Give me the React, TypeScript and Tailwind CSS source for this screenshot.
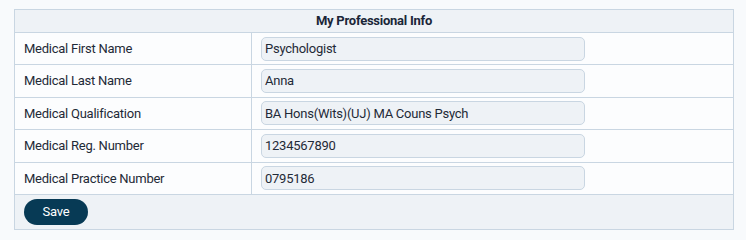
import React from "react";

const rows: [string, string][] = [
  ["Medical First Name", "Psychologist"],
  ["Medical Last Name", "Anna"],
  ["Medical Qualification", "BA Hons(Wits)(UJ) MA Couns Psych"],
  ["Medical Reg. Number", "1234567890"],
  ["Medical Practice Number", "0795186"],
];

export default function App() {
  return (
    <div
      className="w-[746px] h-[240px] bg-[#f8fafc] pl-[14px] pt-[9px]"
      style={{ fontFamily: "Roboto, 'Liberation Sans', sans-serif" }}
    >
      <div className="w-[720px] border border-[#c9d6e2] bg-[#fcfdfe] text-[13px] tracking-[-0.25px] text-[#1f2a37]">
        <div className="h-[23px] bg-[#eef2f6] border-b border-[#c9d6e2] flex items-center justify-center font-bold text-[#1a2638]">
          My Professional Info
        </div>
        {rows.map(([label, value]) => (
          <div
            key={label}
            className="flex h-[32.4px] border-b border-[#c9d6e2]"
          >
            <div className="w-[237px] border-r border-[#c9d6e2] flex items-center pl-[9px]">
              {label}
            </div>
            <div className="flex-1 flex items-center pl-[9px]">
              <div className="w-[324px] h-[24px] rounded-[5px] border border-[#c9d6e2] bg-[#eef2f6] flex items-center px-[3px]">
                {value}
              </div>
            </div>
          </div>
        ))}
        <div className="h-[34px] bg-[#eef2f6] flex items-center pl-[9px]">
          <button className="w-[64px] h-[26px] rounded-full bg-[#073a55] text-white text-[13px]">
            Save
          </button>
        </div>
      </div>
    </div>
  );
}
